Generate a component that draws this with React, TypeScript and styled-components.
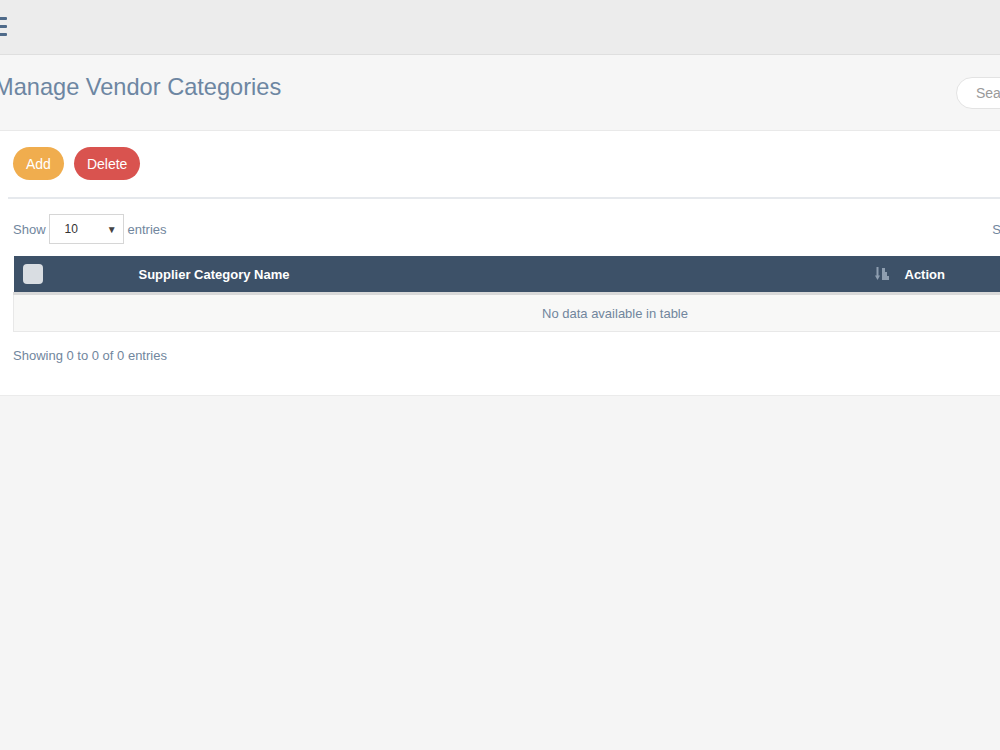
import React from 'react';
import styled, { createGlobalStyle } from 'styled-components';

const GlobalStyle = createGlobalStyle`
  html, body {
    margin: 0;
    padding: 0;
    background: #f5f5f5;
    overflow: hidden;
    font-family: "Liberation Sans", Arial, sans-serif;
  }
`;

const Container = styled.div`
  width: 1262px;
  margin-left: -16px;
  min-height: 750px;
  background: #f5f5f5;
`;

const TopBar = styled.header`
  height: 54px;
  background: #ececec;
  border-bottom: 1px solid #dfdfdf;
  display: flex;
  align-items: center;
  padding-left: 8px;
`;

const Burger = styled.div`
  width: 15px;
  display: flex;
  flex-direction: column;
  gap: 5px;
  margin-top: -2px;

  span {
    display: block;
    height: 3px;
    border-radius: 1px;
    background: #4e6a89;
  }
`;

const TitleBar = styled.div`
  height: 75px;
  background: #f6f6f6;
  border-bottom: 1px solid #e9e9e9;
  display: flex;
  align-items: center;
  justify-content: space-between;
  padding: 0 13px 0 10px;
`;

const Title = styled.h1`
  margin: 0 0 10px 0;
  font-size: 23.6px;
  font-weight: 400;
  color: #6d86a2;
`;

const SearchBox = styled.input`
  width: 240px;
  height: 32px;
  box-sizing: border-box;
  border: 1px solid #e3e3e3;
  border-radius: 16px;
  padding: 0 19px;
  margin-right: 37px;
  font-family: inherit;
  font-size: 14px;
  background: #fff;
  outline: none;

  &::placeholder {
    color: #9a9a9a;
  }
`;

const Card = styled.section`
  background: #fff;
  border-bottom: 1px solid #ebebeb;
  padding: 0 24px;
`;

const Toolbar = styled.div`
  display: flex;
  gap: 10px;
  padding: 16px 5px 17px;
  border-bottom: 2px solid #e6e9ed;
`;

const PillButton = styled.button<{ $color: string }>`
  height: 33px;
  border: none;
  border-radius: 17px;
  padding: 0 13px;
  background: ${(p) => p.$color};
  color: #fff;
  font-family: inherit;
  font-size: 14px;
  cursor: pointer;
`;

const TableSection = styled.div`
  padding: 15px 5px 32px;
`;

const ControlsRow = styled.div`
  display: flex;
  align-items: center;
  justify-content: space-between;
  margin-bottom: 12px;
`;

const Control = styled.label`
  display: flex;
  align-items: center;
  gap: 4px;
  font-size: 13px;
  color: #71869d;
`;

const SelectBox = styled.div`
  width: 75px;
  height: 30px;
  box-sizing: border-box;
  border: 1px solid #d6d6d6;
  display: flex;
  align-items: center;
  justify-content: space-between;
  padding: 0 6px 0 15px;
  margin-left: -1px;
  font-size: 12px;
  color: #333;

  span:last-child {
    font-size: 10px;
    color: #444;
  }
`;

const FilterInput = styled.input`
  width: 174px;
  height: 30px;
  box-sizing: border-box;
  border: 1px solid #d6d6d6;
  margin-left: 2px;
  outline: none;
`;

const Table = styled.table`
  width: 100%;
  table-layout: fixed;
  border-collapse: collapse;
  font-size: 13px;
`;

const HeadCell = styled.th<{ $width?: number }>`
  background: #3d5168;
  color: #fff;
  font-weight: 700;
  text-align: left;
  height: 36px;
  padding: 0 10px;
  border-bottom: 3px solid #d9d9d9;
  width: ${(p) => (p.$width ? `${p.$width}px` : 'auto')};
  position: relative;
`;

const CheckBox = styled.span`
  display: block;
  width: 20px;
  height: 20px;
  border-radius: 4px;
  background: #d9dde2;
  margin-left: -1px;
`;

const SortIcon = styled.svg`
  position: absolute;
  right: 6px;
  top: 11px;
`;

const EmptyCell = styled.td`
  background: #f8f8f7;
  border: 1px solid #e8e8e8;
  border-top: none;
  height: 34px;
  text-align: center;
  color: #71869d;
`;

const Info = styled.div`
  margin-top: 16px;
  font-size: 13px;
  color: #71869d;
`;

function App() {
  return (
    <Container>
      <GlobalStyle />
      <TopBar>
        <Burger>
          <span />
          <span />
          <span />
        </Burger>
      </TopBar>
      <TitleBar>
        <Title>Manage Vendor Categories</Title>
        <SearchBox placeholder="Search..." />
      </TitleBar>
      <Card>
        <Toolbar>
          <PillButton $color="#f0ad4e">Add</PillButton>
          <PillButton $color="#d9534f">Delete</PillButton>
        </Toolbar>
        <TableSection>
          <ControlsRow>
            <Control>
              Show
              <SelectBox>
                <span>10</span>
                <span>▼</span>
              </SelectBox>
              entries
            </Control>
            <Control>
              Search:
              <FilterInput />
            </Control>
          </ControlsRow>
          <Table>
            <thead>
              <tr>
                <HeadCell $width={95}>
                  <CheckBox />
                </HeadCell>
                <HeadCell $width={746}>
                  Supplier Category Name
                  <SortIcon width="14" height="13" viewBox="0 0 14 13">
                    <g fill="#8e9eb0">
                      <rect x="1.5" y="0" width="2" height="9" />
                      <path d="M0 8.5h5L2.5 13z" />
                      <rect x="7" y="1" width="3" height="12" />
                      <rect x="10" y="5" width="2" height="8" />
                      <rect x="12" y="9" width="2" height="4" />
                    </g>
                  </SortIcon>
                </HeadCell>
                <HeadCell>Action</HeadCell>
              </tr>
            </thead>
            <tbody>
              <tr>
                <EmptyCell colSpan={3}>No data available in table</EmptyCell>
              </tr>
            </tbody>
          </Table>
          <Info>Showing 0 to 0 of 0 entries</Info>
        </TableSection>
      </Card>
    </Container>
  );
}

export default App;
